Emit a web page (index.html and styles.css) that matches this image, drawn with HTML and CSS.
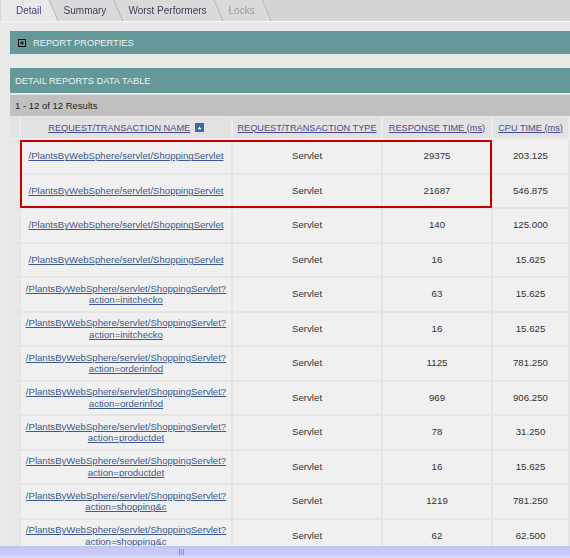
FILE: index.html
```html
<!DOCTYPE html>
<html>
<head>
<meta charset="utf-8">
<title>Detail Reports</title>
<link rel="stylesheet" href="styles.css">
</head>
<body>
<div class="page">
  <div class="tabs">
    <div class="tab active"><span class="tab-shape">Detail</span></div>
    <div class="tab"><span class="tab-shape">Summary</span></div>
    <div class="tab"><span class="tab-shape">Worst Performers</span></div>
    <div class="tab disabled"><span class="tab-shape">Locks</span></div>
  </div>
  <div class="content">
    <div class="bar bar-props">
      <svg class="expand-icon" width="8" height="8" viewBox="0 0 8 8"><rect x="0.5" y="0.5" width="7" height="7" fill="none" stroke="#111" stroke-width="1"/><path d="M2 4H6M4 2V6" stroke="#111" stroke-width="1"/></svg>
      <span>REPORT PROPERTIES</span>
    </div>
    <div class="bar bar-detail">DETAIL REPORTS DATA TABLE</div>
    <div class="results">1 - 12 of 12 Results</div>
    <div class="grid-wrap">
      <table class="grid">
        <colgroup>
          <col class="c-lead"><col class="c-name"><col class="c-type"><col class="c-resp"><col class="c-cpu">
        </colgroup>
        <thead>
          <tr>
            <th class="lead"></th>
            <th><a href="#">REQUEST/TRANSACTION NAME</a> <svg class="sort-icon" width="9" height="9" viewBox="0 0 9 9"><rect width="9" height="9" fill="#3e6c9a"/><path d="M2.5 6.2H6.5L4.5 3.6Z" fill="#fff"/></svg></th>
            <th><a href="#">REQUEST/TRANSACTION TYPE</a></th>
            <th><a href="#">RESPONSE TIME (ms)</a></th>
            <th><a href="#">CPU TIME (ms)</a></th>
          </tr>
        </thead>
        <tbody>
          <tr><td class="lead"></td><td><a href="#">/PlantsByWebSphere/servlet/ShoppingServlet</a></td><td>Servlet</td><td>29375</td><td>203.125</td></tr>
          <tr><td class="lead"></td><td><a href="#">/PlantsByWebSphere/servlet/ShoppingServlet</a></td><td>Servlet</td><td>21687</td><td>546.875</td></tr>
          <tr><td class="lead"></td><td><a href="#">/PlantsByWebSphere/servlet/ShoppingServlet</a></td><td>Servlet</td><td>140</td><td>125.000</td></tr>
          <tr><td class="lead"></td><td><a href="#">/PlantsByWebSphere/servlet/ShoppingServlet</a></td><td>Servlet</td><td>16</td><td>15.625</td></tr>
          <tr><td class="lead"></td><td><a href="#">/PlantsByWebSphere/servlet/ShoppingServlet?<br>action=initchecko</a></td><td>Servlet</td><td>63</td><td>15.625</td></tr>
          <tr><td class="lead"></td><td><a href="#">/PlantsByWebSphere/servlet/ShoppingServlet?<br>action=initchecko</a></td><td>Servlet</td><td>16</td><td>15.625</td></tr>
          <tr><td class="lead"></td><td><a href="#">/PlantsByWebSphere/servlet/ShoppingServlet?<br>action=orderinfod</a></td><td>Servlet</td><td>1125</td><td>781.250</td></tr>
          <tr><td class="lead"></td><td><a href="#">/PlantsByWebSphere/servlet/ShoppingServlet?<br>action=orderinfod</a></td><td>Servlet</td><td>969</td><td>906.250</td></tr>
          <tr><td class="lead"></td><td><a href="#">/PlantsByWebSphere/servlet/ShoppingServlet?<br>action=productdet</a></td><td>Servlet</td><td>78</td><td>31.250</td></tr>
          <tr><td class="lead"></td><td><a href="#">/PlantsByWebSphere/servlet/ShoppingServlet?<br>action=productdet</a></td><td>Servlet</td><td>16</td><td>15.625</td></tr>
          <tr><td class="lead"></td><td><a href="#">/PlantsByWebSphere/servlet/ShoppingServlet?<br>action=shopping&amp;c</a></td><td>Servlet</td><td>1219</td><td>781.250</td></tr>
          <tr><td class="lead"></td><td><a href="#">/PlantsByWebSphere/servlet/ShoppingServlet?<br>action=shopping&amp;c</a></td><td>Servlet</td><td>62</td><td>62.500</td></tr>
        </tbody>
      </table>
      <div class="highlight"></div>
    </div>
  </div>
  <div class="hscroll"><span class="grip"></span></div>
</div>
</body>
</html>
```
FILE: styles.css
```css
html, body {
  margin: 0;
  padding: 0;
}
body {
  font-family: "Liberation Sans", Arial, sans-serif;
  background: #e9e9e9;
}
.page {
  width: 570px;
  height: 558px;
  display: flex;
  flex-direction: column;
  overflow: hidden;
}

/* Tabs */
.tabs {
  display: flex;
  height: 21px;
  flex: none;
  background: #d4d4d4;
  padding-left: 1px;
}
.tab {
  margin-left: -9px;
  filter: drop-shadow(1px 0 0 #b6b6b6);
}
.tab:first-child { margin-left: 0; z-index: 4; }
.tab:nth-child(2) { z-index: 3; }
.tab:nth-child(3) { z-index: 2; }
.tab:nth-child(4) { z-index: 1; }
.tab-shape {
  display: block;
  height: 21px;
  line-height: 21px;
  padding: 0 16px 0 15px;
  background: #dadada;
  clip-path: polygon(0 0, calc(100% - 9px) 0, 100% 100%, 0 100%);
  font-size: 10px;
  color: #3e3e58;
}
.tab.active .tab-shape {
  background: #e9e9e9;
  color: #4a3c80;
}
.tab.disabled .tab-shape {
  color: #9797a8;
}

/* Content */
.content {
  flex: 1;
  min-height: 0;
  overflow: hidden;
  background: #e9e9e9;
  border-top: 1px solid #f6f6f6;
  padding: 9px 0 0 10px;
}
.bar {
  background: #649899;
  color: #eef4f4;
  font-size: 9.3px;
  display: flex;
  align-items: center;
}
.bar-props {
  height: 23px;
  padding-left: 8px;
  gap: 7px;
}
.expand-icon { display: block; }
.bar-detail {
  height: 25px;
  margin-top: 14px;
  padding-left: 5px;
}
.results {
  margin-top: 2px;
  height: 21px;
  background: #c0c0c0;
  color: #222;
  font-size: 9.5px;
  padding-left: 5px;
  display: flex;
  align-items: center;
}

/* Table */
.grid-wrap {
  position: relative;
  margin-top: 1px;
}
.grid {
  border-collapse: separate;
  border-spacing: 0;
  table-layout: fixed;
  width: 560px;
}
.c-lead { width: 11px; }
.c-name { width: 212px; }
.c-type { width: 150px; }
.c-resp { width: 110px; }
.c-cpu { width: 77px; }
.grid thead tr { height: 23px; }
.grid th {
  background: #e2e2e2;
  border-right: 2px solid #ececec;
  border-bottom: 2px solid #ececec;
  font-weight: normal;
  font-size: 9.2px;
  padding: 0;
  white-space: nowrap;
  text-align: center;
}
.grid th a {
  color: #4a4a8e;
}
.grid th.lead { background: #e3e3e3; }
.sort-icon {
  vertical-align: -1px;
  margin-left: 2px;
}
.grid tbody tr { height: 34.5px; }
.grid td {
  background: #f0f0f0;
  border-right: 2px solid #e5e5e5;
  border-bottom: 2px solid #e5e5e5;
  text-align: center;
  padding: 0 2px;
  font-size: 9.7px;
  line-height: 11.6px;
  color: #333;
}
.grid td a {
  color: #3a5a8e;
  font-size: 9.6px;
}
.grid td.lead {
  background: #e8e8e8;
  padding: 0;
}
.highlight {
  position: absolute;
  left: 10px;
  top: 23px;
  width: 472px;
  height: 68px;
  box-sizing: border-box;
  border: 2px solid #bf0000;
}

/* Horizontal scrollbar */
.hscroll {
  flex: none;
  height: 12px;
  background: linear-gradient(#bcc6f2, #c9c9f8 30%, #c9c9f8 65%, #d8e2fa);
  display: flex;
  align-items: center;
  padding-left: 179px;
}
.grip {
  width: 6px;
  height: 6px;
  background: repeating-linear-gradient(to right, #8e8ed2 0 1px, transparent 1px 2px);
}
```
